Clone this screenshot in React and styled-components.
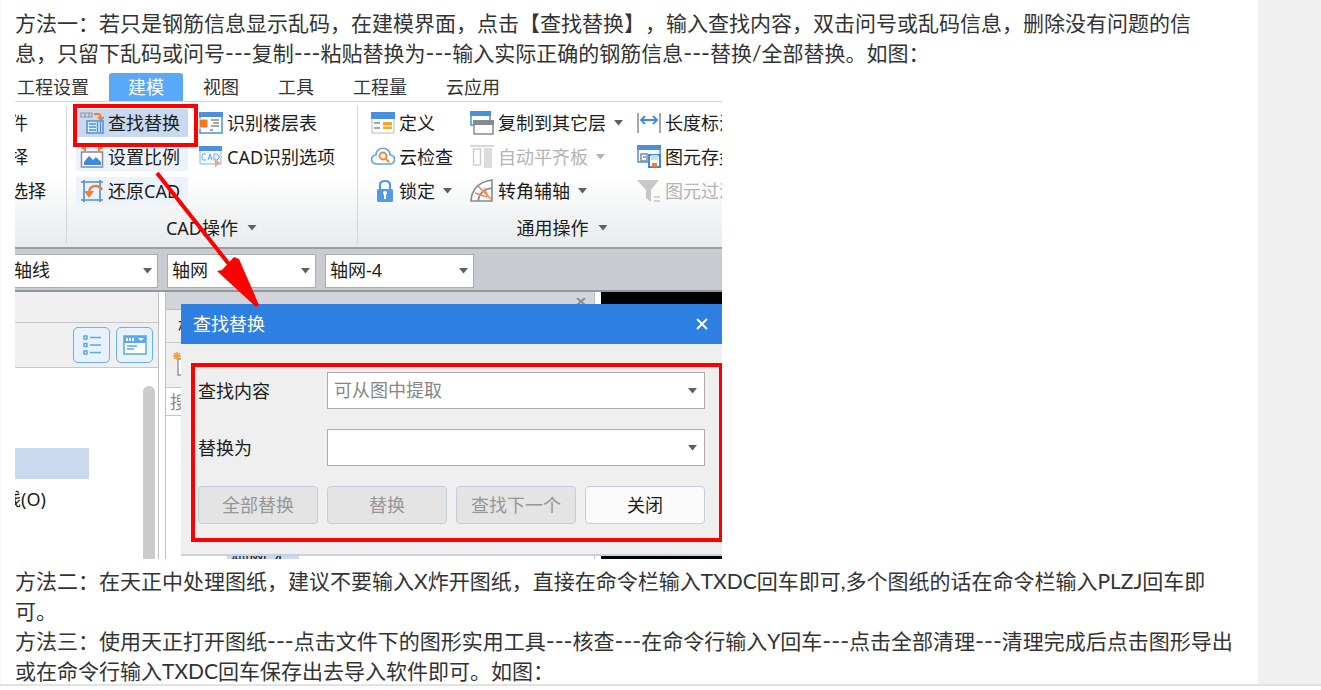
import React from 'react';
import styled, { createGlobalStyle } from 'styled-components';

const GlobalStyle = createGlobalStyle`
* { box-sizing: border-box; }
body {
  margin: 0;
  background: #fff;
  font-family: "Noto Sans", "Noto Sans CJK SC", sans-serif;
}
button, select { font: inherit; color: inherit; margin: 0; padding: 0; }
`;

const Page = styled.main`
  display: flex;
  border-bottom: 2px solid #e2e2e2;
`;

const Article = styled.article`
  flex: 1;
  min-width: 0;
  padding: 8px 16px 0 14px;
  border-left: 1px solid #f6f6f6;
`;

const Side = styled.aside`
  width: 63px;
  background: #f0f0f0;
`;

const Text = styled.p`
  margin: 0;
  font-family: Lato, "Noto Sans CJK SC", sans-serif;
  font-size: 21px;
  line-height: 30px;
  color: #333;
  white-space: nowrap;
  font-kerning: none;
  text-spacing-trim: space-all;
  &:last-child {
    margin-bottom: -2px;
  }
`;

const Dashes = styled.span`
  font-size: 24px;
  line-height: 1;
`;

const Shot = styled.figure`
  position: relative;
  margin: 4px 0 7px;
  width: 100%;
  max-width: 707px;
  overflow: hidden;
  font-size: 18px;
  line-height: 28px;
  color: #1c1c1c;
`;

const Tabs = styled.nav`
  display: flex;
  gap: 1px;
  height: 30px;
  padding-top: 1px;
  margin-left: -17px;
  border-bottom: 1px solid #d2d4d6;
`;

const Tab = styled.button`
  flex: none;
  border: 0;
  padding: 0 19px;
  border-radius: 3px 3px 0 0;
  background: ${(p) => (p.$active ? '#5aa8f8' : 'transparent')};
  color: ${(p) => (p.$active ? '#fff' : '#333')};
`;

const Ribbon = styled.div`
  display: flex;
  height: 145px;
  padding: 4px 0;
  background: linear-gradient(#fff 50%, #e8ebec);
`;

const Group = styled.section`
  flex: none;
  display: flex;
  flex-direction: column;
  align-items: center;
  width: ${(p) => p.$width};
  border-right: 1px solid #d4d6d8;
`;

const Columns = styled.div`
  display: flex;
  align-self: stretch;
  height: 108px;
  gap: ${(p) => p.$gap || '0'};
  padding-left: ${(p) => p.$inset || '0'};
`;

const Column = styled.div`
  flex: none;
  display: flex;
  flex-direction: column;
  align-items: flex-start;
  gap: 6px;
  padding-top: 3px;
  width: ${(p) => p.$width || 'auto'};
`;

const Tool = styled.button`
  flex: none;
  display: flex;
  align-items: center;
  gap: 4px;
  height: 28px;
  border: 0;
  padding-left: ${(p) => (p.$tone ? '4px' : '0')};
  padding-right: ${(p) => (p.$tone ? '8px' : '0')};
  background: ${(p) => p.$tone || 'transparent'};
  color: ${(p) => (p.disabled ? '#b4b4b4' : '#1c1c1c')};
  white-space: nowrap;
`;

const GroupName = styled.button`
  display: flex;
  align-items: center;
  gap: 4px;
  height: 28px;
  border: 0;
  background: transparent;
`;

const ClippedTools = styled.div`
  margin-left: -5px;
`;

const ComboBar = styled.div`
  display: flex;
  gap: 9px;
  height: 45px;
  padding: 5px 0;
  margin-left: -6px;
  background: #c8cbcf;
  border-top: 2px solid #999ea5;
  border-bottom: 2px solid #92979d;
`;

const Arrowhead = styled.svg`
  margin-left: 4px;
`;

const Combo = styled.div`
  position: relative;
  width: ${(p) => p.$width || 'auto'};
  height: ${(p) => p.$height || '34px'};
  grid-column: ${(p) => p.$span || 'auto'};
  color: ${(p) => p.$color || '#1c1c1c'};
  select {
    width: 100%;
    height: 100%;
    padding: 0 26px 2px ${(p) => (p.$span ? '6px' : '4px')};
    appearance: none;
    border: 1px solid #acacac;
    border-radius: 0;
    background: #fff;
  }
  svg {
    position: absolute;
    right: ${(p) => (p.$span ? '8px' : '6px')};
    top: 50%;
    margin-top: -3px;
    pointer-events: none;
  }
`;

const Workspace = styled.div`
  display: flex;
  height: 267px;
  overflow: hidden;
`;

const Tree = styled.section`
  flex: none;
  display: flex;
  flex-direction: column;
  width: 144px;
  border-right: 1px solid #bcc0c6;
`;

const TreeHead = styled.div`
  flex: none;
  height: 31px;
  background: #efefef;
  border-bottom: 1px solid #c4c7cc;
`;

const TreeTools = styled.div`
  flex: none;
  display: flex;
  justify-content: flex-end;
  align-items: center;
  gap: 6px;
  height: 45px;
  padding-right: 5px;
  background: #efefef;
  border-bottom: 1px solid #c4c7cc;
`;

const ViewButton = styled.button`
  display: flex;
  align-items: center;
  justify-content: center;
  width: 37px;
  height: 36px;
  border: 1px solid #68aff5;
  border-radius: 5px;
  background: #e7f2fe;
`;

const TreeBody = styled.div`
  flex: 1;
  display: flex;
  justify-content: space-between;
  padding-right: 3px;
`;

const TreeList = styled.div`
  padding-top: 80px;
  width: 74px;
`;

const TreeSelected = styled.div`
  height: 31px;
  margin-bottom: 6px;
  background: #c9d9f0;
`;

const TreeItem = styled.div`
  margin-left: -12px;
  white-space: nowrap;
`;

const Scroll = styled.div`
  width: 12px;
  margin-top: 18px;
  border-radius: 6px 6px 0 0;
  background: #cbcbcb;
`;

const List = styled.section`
  flex: none;
  display: flex;
  flex-direction: column;
  width: 430px;
  margin-left: 6px;
  border-left: 1px solid #bcc0c6;
  border-right: 1px solid #bcc0c6;
`;

const ListHead = styled.div`
  flex: none;
  display: flex;
  justify-content: flex-end;
  height: 18px;
  padding: 6px 8px 0;
  background: #d2d4d9;
  border-bottom: 1px solid #bcc0c6;
`;

const ListRow = styled.div`
  flex: none;
  display: flex;
  align-items: center;
  height: ${(p) => p.$height};
  padding-left: ${(p) => p.$inset || '4px'};
  background: ${(p) => p.$bg || '#efefef'};
  color: ${(p) => p.$color || '#1c1c1c'};
  border-bottom: 1px solid #c4c7cc;
`;

const ListItem = styled.div`
  width: 72px;
  height: 28px;
  margin: 136px 0 0 61px;
  padding-left: 4px;
  line-height: 14px;
  background: #c9d9f0;
`;

const Canvas = styled.div`
  flex: 1;
  margin-left: 6px;
  background: #000;
`;

const Dialog = styled.form`
  position: absolute;
  left: 166px;
  right: 0;
  top: 232px;
  border-bottom: 2px solid #c9d1de;
  background: #efefef;
`;

const DialogTitle = styled.header`
  display: flex;
  align-items: center;
  justify-content: space-between;
  height: 40px;
  padding: 0 14px 0 12px;
  background: #2d80e2;
  color: #fff;
`;

const Close = styled.button`
  display: flex;
  border: 0;
  background: transparent;
`;

const Fields = styled.div`
  display: grid;
  grid-template-columns: repeat(4, 1fr);
  column-gap: 9px;
  row-gap: 20px;
  align-items: center;
  margin: 19px 0 12px 10px;
  padding: 5px 14px 14px 3px;
  border: 4px solid #f00;
  border-right-width: 3px;
`;

const Action = styled.button`
  height: 38px;
  border: 1px solid #c5cddb;
  border-radius: 4px;
  background: ${(p) => (p.disabled ? '#e4e4e4' : '#fafafa')};
  color: ${(p) => (p.disabled ? '#969696' : '#1c1c1c')};
`;

const Marker = styled.div`
  position: absolute;
  left: 58px;
  top: 32px;
  width: 125px;
  height: 43px;
  border: 4px solid #f00;
`;

const Arrow = styled.svg`
  position: absolute;
  left: 135px;
  top: 96px;
`;

const Icon = ({ children, w = 24, h = 24 }) => (
  <svg width={w} height={h} viewBox={`0 0 ${w} ${h}`} fill="none">
    {children}
  </svg>
);

const Caret = ({ size = 9, color = '#606060' }) => (
  <Arrowhead width={size} height="6" viewBox="0 0 9 6">
    <path d="M0 0h9L4.500 5.500z" fill={color} />
  </Arrowhead>
);

const FindIcon = () => (
  <Icon>
    <path d="M1 2h11v4H1zM5 2v4M9 2v4" stroke="#92979d" strokeWidth="1.200" />
    <path d="M14 3h4q3 0 3 5M18 6l3 3 3-3" stroke="#f08030" strokeWidth="1.800" />
    <path d="M7 10h16v12H7z" fill="#e4effc" stroke="#4a90dc" strokeWidth="1.500" />
    <path d="M9 13h7M9 16h7M9 19h7M17.500 11v10M20.500 11v10" stroke="#4a90dc" strokeWidth="1.500" />
  </Icon>
);

const ScaleIcon = () => (
  <Icon>
    <path d="M1 3l5-4v8zM23 3l-5-4v8z" fill="#f08030" />
    <path d="M1.500 7h21v15h-21z" fill="#fff" stroke="#858b92" strokeWidth="1.500" />
    <path d="M4 20v-3l5-6 4 4 3-3 5 5v3z" fill="#3f8ae0" />
  </Icon>
);

const RestoreIcon = () => (
  <Icon>
    <path d="M4 1v22M20 1v22M1 3h22M1 21h22" stroke="#4a90dc" strokeWidth="1.600" />
    <path d="M9 14q0-7 7-7 4 0 6 4" stroke="#f08030" strokeWidth="2.400" />
    <path d="M4 12h10l-5 7z" fill="#f08030" />
  </Icon>
);

const FloorIcon = () => (
  <Icon>
    <path d="M1 2h22v20H1z" fill="#fff" stroke="#4a90dc" strokeWidth="1.500" />
    <path d="M0 1h24v5H0z" fill="#4a90dc" />
    <path d="M0 8h9v9H0z" fill="#f07820" stroke="#fff" />
    <path d="M12 9h8M14 12h6M12 15h8M11 19h3" stroke="#858b92" strokeWidth="1.500" />
  </Icon>
);

const CadIcon = () => (
  <Icon>
    <path d="M1 2h21v17H1z" fill="#f4f9ff" stroke="#8bb9ec" />
    <path d="M0 1h23v5H0z" fill="#4a90dc" />
    <path d="M7 9H4l-1 2v3l1 1h3M9 15l2-6 2 6M10 13h3M15 9v6h3l2-2V11l-2-2z" stroke="#6da9e8" />
    <path d="M16 13l6 6-3 .5-3 3z" fill="#f8a080" />
  </Icon>
);

const DefineIcon = () => (
  <Icon>
    <path d="M1 2h22v20H1z" fill="#fff" stroke="#b5babf" />
    <path d="M0 1h24v7H0z" fill="#4a90e0" />
    <path d="M3 12h6M3 17h6" stroke="#858b92" strokeWidth="1.500" />
    <path d="M12 11h9v7h-9z" fill="#f8a820" />
    <path d="M12 15h9" stroke="#fff" />
  </Icon>
);

const CloudIcon = () => (
  <Icon>
    <path d="M6 19c-7 0-7-9-1-9 0-9 14-9 14 0 6 0 6 9 0 9z" stroke="#58a2ee" strokeWidth="1.600" />
    <circle cx="12" cy="11" r="3.500" stroke="#f08030" strokeWidth="1.800" />
    <path d="M15 14l3 3" stroke="#f08030" strokeWidth="2" />
  </Icon>
);

const LockIcon = () => (
  <Icon>
    <path d="M9 12V6q0-4 5-4t5 4v6" stroke="#5599e4" strokeWidth="2.200" />
    <rect x="6" y="10" width="16" height="13" rx="1.500" fill="#5599e4" />
    <path d="M14 15v5" stroke="#fff" strokeWidth="2" />
    <circle cx="14" cy="14" r="2" fill="#fff" />
  </Icon>
);

const CopyIcon = () => (
  <Icon>
    <path d="M1 1h19v13H1z" fill="#fff" stroke="#4a90dc" strokeWidth="1.500" />
    <path d="M0 0h21v5H0z" fill="#4a90dc" />
    <path d="M4 10h19v13H4z" fill="#fff" stroke="#858b92" strokeWidth="1.500" />
    <path d="M3 9h21v5H3z" fill="#858b92" />
  </Icon>
);

const AlignIcon = () => (
  <Icon>
    <path d="M0 1h24" stroke="#c8c8c8" strokeWidth="1.500" />
    <path d="M3.500 4h7v16h-7z" stroke="#d0d0d0" strokeWidth="1.500" />
    <path d="M14 3h8v20h-8z" fill="#dcdcdc" />
  </Icon>
);

const AxisIcon = () => (
  <Icon>
    <path d="M22 1v21H1Q2 4 22 1zM22 9Q10 10 8 22" stroke="#858b92" strokeWidth="1.600" />
    <path d="M22 21L7 6M14 9l4 8M5 14l12 4" stroke="#f08a50" strokeWidth="1.600" />
  </Icon>
);

const LengthIcon = () => (
  <Icon>
    <path d="M1 2v20M23 2v20" stroke="#858b92" strokeWidth="1.500" />
    <path d="M5 9h14M8 5L4 9l4 4M16 5l4 4-4 4" stroke="#3f8ae0" strokeWidth="1.800" />
  </Icon>
);

const SaveIcon = () => (
  <Icon>
    <path d="M1 1h22v16H1z" fill="#fff" stroke="#4a90dc" strokeWidth="1.500" />
    <path d="M0 0h24v5H0z" fill="#4a90dc" />
    <path d="M4 9h6v7H4zM6 12h3" stroke="#858b92" strokeWidth="1.500" />
    <path d="M12 10h11v12H12z" fill="#fff" stroke="#3f8ae0" strokeWidth="2" />
    <path d="M14 10h7v5h-7z" fill="#c4def8" />
    <path d="M15 18h5v4h-5z" fill="#f08030" />
  </Icon>
);

const FilterIcon = () => (
  <Icon>
    <path d="M0 1h22l-8 10v12l-5-4v-8z" fill="#c8c8c8" />
    <path d="M17 18h6M17 22h6" stroke="#c8c8c8" strokeWidth="1.500" />
  </Icon>
);

const ListIcon = () => (
  <Icon w={20} h={22}>
    <path d="M2 2h3v3H2zM2 9.500h3v3H2zM2 17h3v3H2zM8 3.500h11M8 11h11M8 18.500h11" stroke="#58a8f2" strokeWidth="1.500" />
  </Icon>
);

const CardIcon = () => (
  <Icon w={24} h={20}>
    <path d="M1 1h22v18H1z" fill="#fff" stroke="#58a8f2" strokeWidth="1.500" />
    <path d="M1 1h22v7H1z" fill="#58a8f2" />
    <path d="M4 3v3M7 3v3M10 3v3" stroke="#fff" strokeWidth="2" />
    <path d="M15 3h6l-3 3z" fill="#fff" />
    <path d="M4 11h10M4 14h7" stroke="#58a8f2" strokeWidth="1.500" />
  </Icon>
);

const NewIcon = () => (
  <Icon w={24} h={28}>
    <path d="M5 8h14v16H5z" fill="#fff" stroke="#92979d" strokeWidth="1.500" />
    <path d="M4 1v8M0 5h8M1 2l6 6M7 2L1 8" stroke="#f5a030" strokeWidth="1.500" />
  </Icon>
);

const CrossIcon = ({ color }) => (
  <Icon w={12} h={12}>
    <path d="M1 1l10 10M11 1L1 11" stroke={color} strokeWidth="2" />
  </Icon>
);

const SmallCross = () => (
  <Icon w={10} h={8}>
    <path d="M1 0l8 7M9 0L1 7" stroke="#8c8c8c" strokeWidth="2" />
  </Icon>
);

const ComboBox = ({ value, label, ...rest }) => (
  <Combo {...rest}>
    <select aria-label={label} id={rest.id ? `${rest.id}-select` : undefined} defaultValue={value}>
      <option>{value}</option>
    </select>
    <Caret />
  </Combo>
);

// steps in a sentence are joined with three dashes
const Steps = ({ items }) =>
  items.map((item, i) => (
    <React.Fragment key={item}>
      {i > 0 && <Dashes>---</Dashes>}
      {item}
    </React.Fragment>
  ));

function RibbonBar() {
  return (
    <Ribbon>
      <Group $width="52px">
        <Columns>
          <ClippedTools>
            <Column>
              <Tool>件</Tool>
              <Tool>择</Tool>
              <Tool>选择</Tool>
            </Column>
          </ClippedTools>
        </Columns>
      </Group>
      <Group $width="291px">
        <Columns $inset="9px" $gap="7px">
          <Column $width="116px">
            <Tool $tone="#c9d9f0"><FindIcon />查找替换</Tool>
            <Tool $tone="#ecf3fc"><ScaleIcon />设置比例</Tool>
            <Tool $tone="#ecf3fc"><RestoreIcon />还原CAD</Tool>
          </Column>
          <Column>
            <Tool><FloorIcon />识别楼层表</Tool>
            <Tool><CadIcon />CAD识别选项</Tool>
          </Column>
        </Columns>
        <GroupName>CAD操作 <Caret size={12} /></GroupName>
      </Group>
      <Group $width="410px">
        <Columns $inset="13px">
          <Column $width="99px">
            <Tool><DefineIcon />定义</Tool>
            <Tool><CloudIcon />云检查</Tool>
            <Tool><LockIcon />锁定 <Caret /></Tool>
          </Column>
          <Column $width="167px">
            <Tool><CopyIcon />复制到其它层 <Caret /></Tool>
            <Tool disabled><AlignIcon />自动平齐板 <Caret color="#b4b4b4" /></Tool>
            <Tool><AxisIcon />转角辅轴 <Caret /></Tool>
          </Column>
          <Column>
            <Tool><LengthIcon />长度标注</Tool>
            <Tool><SaveIcon />图元存盘</Tool>
            <Tool disabled><FilterIcon />图元过滤</Tool>
          </Column>
        </Columns>
        <GroupName>通用操作 <Caret size={12} /></GroupName>
      </Group>
    </Ribbon>
  );
}

function ReplaceDialog() {
  return (
    <Dialog onSubmit={(e) => e.preventDefault()}>
      <DialogTitle>
        查找替换
        <Close type="button" aria-label="关闭窗口"><CrossIcon color="#fff" /></Close>
      </DialogTitle>
      <Fields>
        <label htmlFor="find-select">查找内容</label>
        <ComboBox id="find" value="可从图中提取" $span="span 3" $height="37px" $color="#868686" />
        <label htmlFor="replace-select">替换为</label>
        <ComboBox id="replace" value="" $span="span 3" $height="37px" />
        <Action type="button" disabled>全部替换</Action>
        <Action type="button" disabled>替换</Action>
        <Action type="button" disabled>查找下一个</Action>
        <Action type="button">关闭</Action>
      </Fields>
    </Dialog>
  );
}

function Software() {
  return (
    <Shot>
      <Tabs>
        <Tab>工程设置</Tab>
        <Tab $active>建模</Tab>
        <Tab>视图</Tab>
        <Tab>工具</Tab>
        <Tab>工程量</Tab>
        <Tab>云应用</Tab>
      </Tabs>
      <RibbonBar />
      <ComboBar>
        <ComboBox label="构件类别" value="轴线" $width="149px" />
        <ComboBox label="构件类型" value="轴网" $width="149px" />
        <ComboBox label="构件名称" value="轴网-4" $width="149px" />
      </ComboBar>
      <Workspace>
        <Tree>
          <TreeHead />
          <TreeTools>
            <ViewButton aria-label="列表"><ListIcon /></ViewButton>
            <ViewButton aria-label="卡片"><CardIcon /></ViewButton>
          </TreeTools>
          <TreeBody>
            <TreeList>
              <TreeSelected />
              <TreeItem>线(O)</TreeItem>
            </TreeList>
            <Scroll />
          </TreeBody>
        </Tree>
        <List>
          <ListHead><SmallCross /></ListHead>
          <ListRow $height="33px" $inset="12px">构件列表</ListRow>
          <ListRow $height="45px" $inset="7px"><NewIcon /></ListRow>
          <ListRow $height="28px" $bg="#fff" $color="#868686">搜索构件</ListRow>
          <ListItem>轴网-4</ListItem>
        </List>
        <Canvas />
      </Workspace>
      <ReplaceDialog />
      <Marker />
      <Arrow width="116" height="142" viewBox="0 0 116 142">
        <path d="M7 5L82 100" stroke="#f00" strokeWidth="4" />
        <path d="M67 103l5-1 11-12 1-1 5 2 20 46-3 2z" fill="#f00" />
      </Arrow>
    </Shot>
  );
}

function App() {
  return (
    <>
      <GlobalStyle />
      <Page>
        <Article>
          <Text>
            方法一：若只是钢筋信息显示乱码，在建模界面，点击【查找替换】，输入查找内容，双击问号或乱码信息，删除没有问题的信
            <br />
            <Steps
              items={[
                '息，只留下乱码或问号',
                '复制',
                '粘贴替换为',
                '输入实际正确的钢筋信息',
                '替换/全部替换。如图：',
              ]}
            />
          </Text>
          <Software />
          <Text>
            方法二：在天正中处理图纸，建议不要输入X炸开图纸，直接在命令栏输入TXDC回车即可,多个图纸的话在命令栏输入PLZJ回车即
            <br />
            可。
          </Text>
          <Text>
            <Steps
              items={[
                '方法三：使用天正打开图纸',
                '点击文件下的图形实用工具',
                '核查',
                '在命令行输入Y回车',
                '点击全部清理',
                '清理完成后点击图形导出',
              ]}
            />
            <br />
            或在命令行输入TXDC回车保存出去导入软件即可。如图：
          </Text>
        </Article>
        <Side />
      </Page>
    </>
  );
}

export default App;
